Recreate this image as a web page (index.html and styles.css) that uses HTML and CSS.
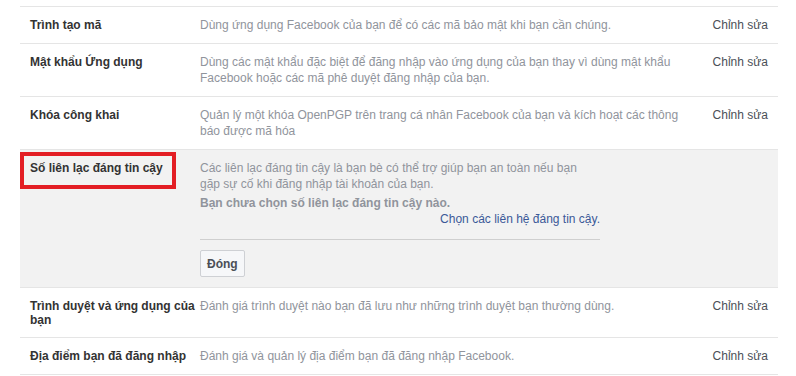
FILE: index.html
```html
<!DOCTYPE html>
<html lang="vi">
<head>
  <meta charset="UTF-8" />
  <title>Bảo mật và đăng nhập</title>
  <link rel="stylesheet" href="styles.css">
</head>
<body>
  <div class="settings">
    <div class="row">
      <div class="label">Trình tạo mã</div>
      <div class="desc">Dùng ứng dụng Facebook của bạn để có các mã bảo mật khi bạn cần chúng.</div>
      <a class="edit" href="#">Chỉnh sửa</a>
    </div>

    <div class="row">
      <div class="label">Mật khẩu Ứng dụng</div>
      <div class="desc">Dùng các mật khẩu đặc biệt để đăng nhập vào ứng dụng của bạn thay vì dùng mật khẩu Facebook hoặc các mã phê duyệt đăng nhập của bạn.</div>
      <a class="edit" href="#">Chỉnh sửa</a>
    </div>

    <div class="row">
      <div class="label">Khóa công khai</div>
      <div class="desc">Quản lý một khóa OpenPGP trên trang cá nhân Facebook của bạn và kích hoạt các thông báo được mã hóa</div>
      <a class="edit" href="#">Chỉnh sửa</a>
    </div>

    <div class="row open">
      <div class="highlight"></div>
      <div class="label">Số liên lạc đáng tin cậy</div>
      <div class="panel">
        <p class="desc">Các liên lạc đáng tin cậy là bạn bè có thể trợ giúp bạn an toàn nếu bạn gặp sự cố khi đăng nhập tài khoản của bạn.</p>
        <p class="desc empty">Bạn chưa chọn số liên lạc đáng tin cậy nào.</p>
        <div class="choose"><a href="#">Chọn các liên hệ đáng tin cậy.</a></div>
        <hr />
        <button>Đóng</button>
      </div>
    </div>

    <div class="row">
      <div class="label">Trình duyệt và ứng dụng của bạn</div>
      <div class="desc">Đánh giá trình duyệt nào bạn đã lưu như những trình duyệt bạn thường dùng.</div>
      <a class="edit" href="#">Chỉnh sửa</a>
    </div>

    <div class="row">
      <div class="label">Địa điểm bạn đã đăng nhập</div>
      <div class="desc">Đánh giá và quản lý địa điểm bạn đã đăng nhập Facebook.</div>
      <a class="edit" href="#">Chỉnh sửa</a>
    </div>
  </div>
</body>
</html>
```

FILE: styles.css
```css
* {
  margin: 0;
  padding: 0;
  box-sizing: border-box;
}
body {
  background: #fff;
  font-family: "Liberation Sans", Arial, sans-serif;
  font-size: 12px;
  line-height: 16px;
}
.settings {
  width: 758px;
  margin: 6px 0 0 20px;
  border-bottom: 1px solid #e5e5e5;
}
.row {
  position: relative;
  display: grid;
  grid-template-columns: 170px 490px 1fr;
  padding: 10px 10px;
  border-top: 1px solid #e5e5e5;
}
.label {
  font-weight: bold;
  color: #333;
  line-height: 14px;
  padding-top: 1px;
  padding-right: 2px;
}
.desc {
  color: #90949c;
}
.edit {
  color: #4b4f56;
  text-decoration: none;
  justify-self: end;
}
.row.open {
  background: #f2f2f2;
}
.row.open .label {
  line-height: 16px;
  padding-top: 0;
}
.panel {
  width: 400px;
}
.desc.empty {
  font-weight: bold;
  margin-top: 3px;
}
.choose {
  text-align: right;
}
.choose a {
  color: #3b5998;
  text-decoration: none;
}
.panel hr {
  border: none;
  border-top: 1px solid #cfcfcf;
  margin: 12px 0 10px;
}
.panel button {
  height: 27px;
  padding: 0 6px;
  background: #f6f7f9;
  border: 1px solid #ced0d4;
  border-radius: 2px;
  color: #4b4f56;
  font-family: inherit;
  font-size: 12px;
  font-weight: bold;
}
/* red annotation box around the label */
.highlight {
  position: absolute;
  left: 0;
  top: 2px;
  width: 156px;
  height: 37px;
  border: 4px solid #e31e24;
}
```
